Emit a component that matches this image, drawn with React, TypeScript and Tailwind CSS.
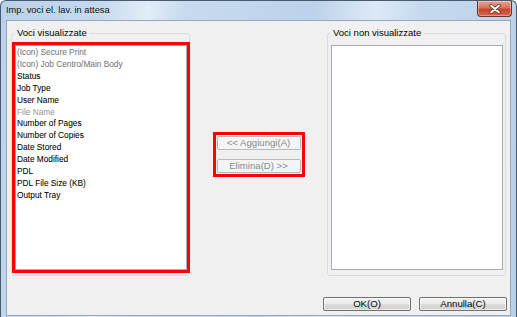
import type { ReactNode } from "react";

type ListItem = {
  label: string;
  tone: "normal" | "muted" | "faint";
};

const shownItems: ListItem[] = [
  { label: "(Icon) Secure Print", tone: "muted" },
  { label: "(Icon) Job Centro/Main Body", tone: "muted" },
  { label: "Status", tone: "normal" },
  { label: "Job Type", tone: "normal" },
  { label: "User Name", tone: "normal" },
  { label: "File Name", tone: "faint" },
  { label: "Number of Pages", tone: "normal" },
  { label: "Number of Copies", tone: "normal" },
  { label: "Date Stored", tone: "normal" },
  { label: "Date Modified", tone: "normal" },
  { label: "PDL", tone: "normal" },
  { label: "PDL File Size (KB)", tone: "normal" },
  { label: "Output Tray", tone: "normal" },
];

const toneClass = {
  normal: "text-black",
  muted: "text-[#777777]",
  faint: "text-[#999999]",
};

function CloseButton() {
  return (
    <div className="absolute right-[4px] top-0 flex h-[16px] w-[35px] items-center justify-center rounded-b-[4px] border border-t-0 border-[#6b3429] bg-[linear-gradient(180deg,#e8a395_0%,#d9735f_45%,#c7452c_55%,#d2674f_100%)] shadow-[inset_0_0_0_1px_rgba(255,255,255,0.35)]">
      <svg width="12" height="10" viewBox="0 0 12 10">
        <path
          d="M2 1.5 L10 8.5 M10 1.5 L2 8.5"
          stroke="#5a2a22"
          strokeWidth="3.4"
          strokeLinecap="round"
        />
        <path
          d="M2 1.5 L10 8.5 M10 1.5 L2 8.5"
          stroke="#ffffff"
          strokeWidth="1.8"
          strokeLinecap="round"
        />
      </svg>
    </div>
  );
}

function GroupBox({ title, children }: { title: string; children: ReactNode }) {
  return (
    <div className="relative flex h-[243px] w-[179px] flex-col rounded-[3px] border border-[#d5dce3] pb-[5px] pl-[3px] pr-[2px] pt-[11px]">
      <span className="absolute left-[2px] top-[-7px] bg-[#f0f0f0] px-[3px] text-[9.5px] leading-[12px] text-black">
        {title}
      </span>
      {children}
    </div>
  );
}

function ListBox({ items }: { items: ListItem[] }) {
  return (
    <div className="h-full w-full border border-[#a5acb5] bg-white pl-[1px] pt-[1px]">
      {items.map((item) => (
        <div
          key={item.label}
          className={`whitespace-nowrap text-[8.3px] leading-[11.9px] [-webkit-text-stroke:0.06px] ${toneClass[item.tone]}`}
        >
          {item.label}
        </div>
      ))}
    </div>
  );
}

function DisabledButton({ label }: { label: string }) {
  return (
    <div className="flex h-[14px] w-[84px] items-center justify-center rounded-[2px] border border-[#b5b9bc] bg-[#f4f4f4] text-[9.6px] text-[#8a8a8a]">
      {label}
    </div>
  );
}

function DialogButton({ label }: { label: string }) {
  return (
    <div className="flex h-[14px] w-[88px] items-center justify-center rounded-[2px] border border-[#707070] bg-[linear-gradient(180deg,#f2f2f2_0%,#ebebeb_50%,#dddddd_51%,#cfcfcf_100%)] text-[9.6px] text-black shadow-[inset_0_0_0_1px_rgba(255,255,255,0.6)]">
      {label}
    </div>
  );
}

export default function App() {
  return (
    <div className="h-[317px] w-[517px] bg-white font-['Liberation_Sans',Arial,sans-serif]">
      <div className="flex h-full w-full flex-col rounded-t-[6px] border border-b-0 border-[#4a5a6e] bg-[linear-gradient(100deg,#b9d1ea_0%,#c6daef_18%,#e2edf8_26%,#c8dbef_32%,#bcd2ea_55%,#dde9f6_66%,#c5d9ee_74%,#b8cfe8_100%)]">
        {/* title bar */}
        <div className="relative flex h-[19px] shrink-0 items-center pl-[5px]">
          <span className="text-[9.3px] text-[#111]">Imp. voci el. lav. in attesa</span>
          <CloseButton />
        </div>

        {/* client area */}
        <div className="mx-[5px] mb-[1px] flex flex-1 flex-col border border-[#95a7ba] bg-[#f0f0f0]">
          <div className="mt-[12px] flex px-[4px]">
            <GroupBox title="Voci visualizzate">
              <div className="h-full w-full outline-[3px] outline-[#ff0000]">
                <ListBox items={shownItems} />
              </div>
            </GroupBox>

            <div className="flex flex-1 items-center justify-center">
              <div className="flex flex-col gap-[9px] border-[3px] border-[#ff0000] p-[1px]">
                <DisabledButton label="<< Aggiungi(A)" />
                <DisabledButton label="Elimina(D) >>" />
              </div>
            </div>

            <GroupBox title="Voci non visualizzate">
              <ListBox items={[]} />
            </GroupBox>
          </div>

          <div className="mt-[21px] flex justify-end gap-[8px] pr-[3px]">
            <DialogButton label="OK(O)" />
            <DialogButton label="Annulla(C)" />
          </div>
        </div>
      </div>
    </div>
  );
}
